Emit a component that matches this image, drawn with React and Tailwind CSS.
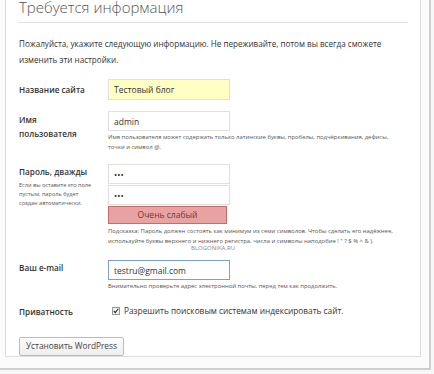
import React from 'react'

const Row = ({ label, children, labelClass = '' }) => (
  <div className="flex">
    <div className={`w-[89px] shrink-0 text-[8.2px] font-semibold text-[#333] leading-[14px] ${labelClass}`}>{label}</div>
    <div className="flex-1">{children}</div>
  </div>
)

const Hint = ({ children, className = '' }) => (
  <p className={`text-[5.9px] leading-[10px] text-[#555] whitespace-nowrap ${className}`}>{children}</p>
)

const inputCls =
  'block w-[122px] h-[20px] px-[5px] border border-[#dfdfdf] bg-white text-[8.5px] text-[#333] outline-none'

export default function App() {
  return (
    <div
      className="min-h-screen bg-[#f7f7f7] overflow-hidden"
      style={{ fontFamily: '"Open Sans", "Noto Sans", sans-serif' }}
    >
      <div className="w-[431px] h-[380px] -mt-[10px] border-r-[2px] border-b-[2px] border-[#cfcfcf] bg-[#fbfbfb] pl-[5px]">
        <div className="w-[416px] h-[367px] bg-white border border-[#dedede] px-[12px]">
          <h1 className="pt-[6px] pl-[1px] text-[15px] font-light text-[#555] leading-[20px]">
            Требуется информация
          </h1>
          <div className="mt-[5px] h-px bg-[#e3e3e3]" />
          <p className="mt-[13px] pl-[1px] text-[8.1px] leading-[16px] text-[#333]">
            Пожалуйста, укажите следующую информацию. Не переживайте, потом вы всегда сможете
            <br />
            изменить эти настройки.
          </p>

          <div className="mt-[11px] pl-[1px] flex flex-col">
            <Row label="Название сайта" labelClass="pt-[4px]">
              <input readOnly value="Тестовый блог" className={`${inputCls} !bg-[#ffffc4] h-[21px]`} />
            </Row>

            <div className="mt-[11px]">
              <Row label={<>Имя<br />пользователя</>} labelClass="pt-[2px]">
                <input readOnly value="admin" className={inputCls} />
                <Hint className="mt-[1px]">
                  Имя пользователя может содержать только латинские буквы, пробелы, подчёркивания, дефисы,
                  <br />
                  точки и символ @.
                </Hint>
              </Row>
            </div>

            <div className="mt-[12px]">
              <Row
                label={
                  <>
                    <div>Пароль, дважды</div>
                    <div className="mt-[2px] text-[5.6px] leading-[9px] font-normal text-[#555]">
                      Если вы оставите это поле
                      <br />
                      пустым, пароль будет
                      <br />
                      создан автоматически.
                    </div>
                  </>
                }
                labelClass="pt-[1px]"
              >
                <input readOnly value="•••" className={`${inputCls} h-[19px]`} />
                <input readOnly value="•••" className={`${inputCls} h-[19px] mt-[1px]`} />
                <div className="mt-[1px] w-[119px] h-[18px] bg-[#e8a2a2] border border-[#c96b6b] flex items-center justify-center text-[8.5px] text-[#6f3b3b]">
                  Очень слабый
                </div>
                <Hint className="mt-[2px]">
                  Подсказка: Пароль должен состоять как минимум из семи символов. Чтобы сделать его надёжнее,
                  <br />
                  используйте буквы верхнего и нижнего регистра, числа и символы наподобие ! " ? $ % ^ &amp; ).
                </Hint>
                <div className="-mt-[2px] pl-[83px] text-[6px] leading-[8px] text-[#888]">BLOGONIKA.RU</div>
              </Row>
            </div>

            <div className="mt-[8px]">
              <Row label="Ваш e-mail" labelClass="pt-[1px]">
                <input
                  readOnly
                  value="testru@gmail.com"
                  className={`${inputCls} h-[18px] !border-[#7c9ed8]`}
                />
                <Hint className="mt-[1px]">
                  Внимательно проверьте адрес электронной почты, перед тем как продолжить.
                </Hint>
              </Row>
            </div>

            <div className="mt-[13px]">
              <Row label="Приватность" labelClass="pt-[1px]">
                <label className="flex items-center gap-[4px] pl-[4px] h-[14px] text-[8.3px] text-[#333]">
                  <span className="w-[8px] h-[8px] border border-[#999] bg-[#f3f3f3] flex items-center justify-center">
                    <svg viewBox="0 0 8 8" className="w-[6px] h-[6px]">
                      <path d="M1 4 L3 6 L7 1" fill="none" stroke="#333" strokeWidth="1.6" />
                    </svg>
                  </span>
                  Разрешить поисковым системам индексировать сайт.
                </label>
              </Row>
            </div>

            <div className="mt-[12px]">
              <button className="h-[19px] px-[6px] border border-[#bbb] rounded-[2px] bg-gradient-to-b from-[#fefefe] to-[#ededed] text-[8.3px] text-[#444]">
                Установить WordPress
              </button>
            </div>
          </div>
        </div>
      </div>
    </div>
  )
}
